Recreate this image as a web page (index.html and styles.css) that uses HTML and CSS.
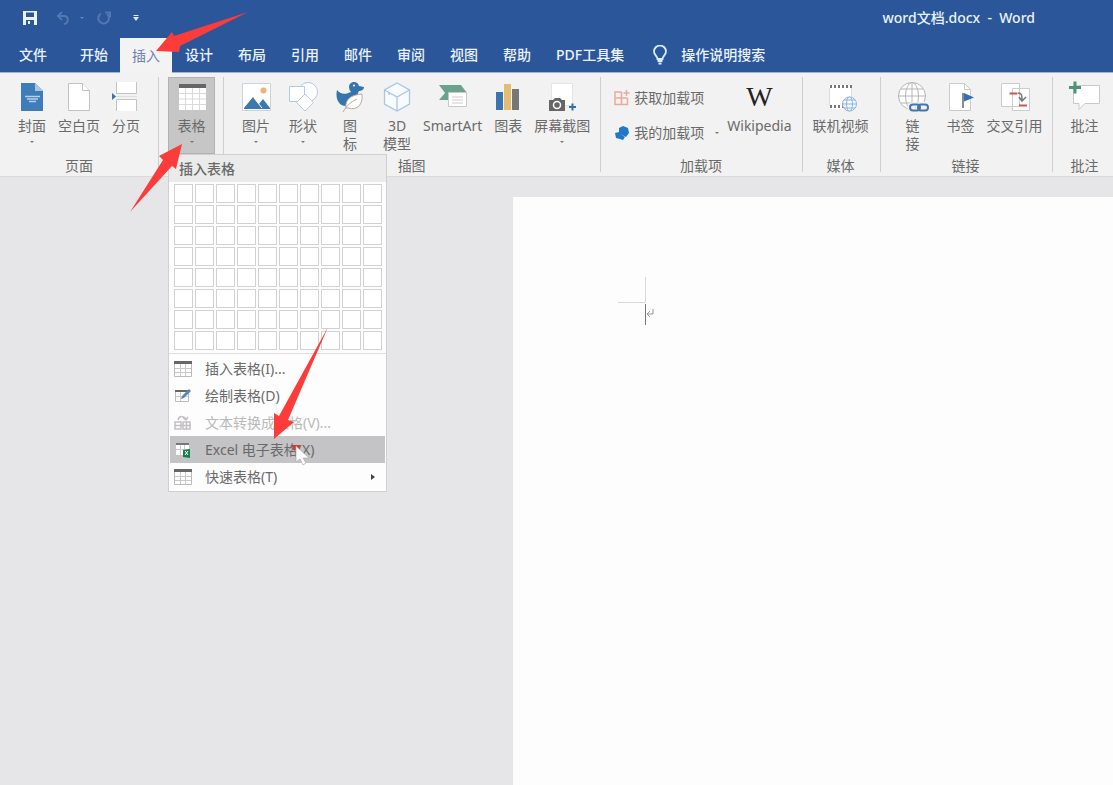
FILE: index.html
```html
<!DOCTYPE html>
<html lang="zh-CN">
<head>
<meta charset="utf-8">
<title>word文档.docx - Word</title>
<link rel="stylesheet" href="styles.css">
</head>
<body>
<header class="titlebar">
  <div class="quick">
    <button class="qbtn" aria-label="保存"><svg width="14" height="14" viewBox="0 0 14 14"><path d="M0 0h14v14H0z" fill="#eaf2fc"/><path d="M3 1.500h8v4.500H3zM3 9h8v5H3z" fill="#2b579a"/><path d="M5 10h2v3H5z" fill="#eaf2fc"/></svg></button>
    <button class="qbtn undo" aria-label="撤消"><svg width="28" height="14" viewBox="0 0 28 14" fill="none" stroke="#5277b2" stroke-width="2"><path d="M6 1L2 5l4 4M2 5h6c5 0 5 7 0 8"/><path d="M24 6h4l-2 2z" fill="#6286bd" stroke="none"/></svg></button>
    <button class="qbtn" aria-label="重复"><svg width="14" height="14" viewBox="0 0 14 14" fill="none" stroke="#5277b2" stroke-width="2"><path d="M4 2.500a5.300 5.300 0 1 0 6 .5M8 1.500h5v5"/></svg></button>
    <button class="qbtn more" aria-label="自定义快速访问工具栏"><svg width="8" height="8" viewBox="0 0 8 8" fill="#dce9f8"><path d="M1.500 1h5v1h-5zM1 3h6L4 7z"/></svg></button>
  </div>
  <h1 class="doc-title">word文档.docx&nbsp; -&nbsp; Word</h1>
</header>
<nav class="tabs">
  <button class="tab file">文件</button>
  <button class="tab">开始</button>
  <button class="tab active">插入</button>
  <button class="tab">设计</button>
  <button class="tab">布局</button>
  <button class="tab">引用</button>
  <button class="tab">邮件</button>
  <button class="tab">审阅</button>
  <button class="tab">视图</button>
  <button class="tab">帮助</button>
  <button class="tab">PDF工具集</button>
  <button class="tab tell"><svg width="14" height="20" viewBox="0 0 14 20" fill="none" stroke="#d9ecff" stroke-width="1.800"><path d="M4.500 14c0-3-3.500-4-3.500-7.500a6 6 0 0 1 12 0C13 10 9.500 11 9.500 14z"/><path d="M4.500 16h5M5.500 18.500h3"/></svg>操作说明搜索</button>
</nav>
<section class="ribbon">
  <div class="group">
    <div class="tools pages">
      <button class="tool"><svg width="32" height="32" viewBox="0 0 32 32"><path d="M5 2h14l8 8v20H5z" fill="#3f7cba"/><path d="M19 2l8 8h-8z" fill="#a9c6e4"/><path d="M9 15.500h15M11 18h11M13 20.500h7" stroke="#b5d0ea" stroke-width="1.500"/></svg><span>封面</span><i class="caret"></i></button>
      <button class="tool"><svg width="32" height="32" viewBox="0 0 32 32" fill="#fff" stroke="#c3c3c3"><path d="M5.500 2.500h14l7 7v20h-21z"/><path d="M19.500 2.500v7h7"/></svg><span>空白页</span></button>
      <button class="tool"><svg width="32" height="32" viewBox="0 0 32 32" fill="#fff" stroke="#c3c3c3"><path d="M6.500 1v11.500h20V1M6.500 30V18.500h20V30"/><path d="M7 1h19v11H7zM7 19h19v11H7z" stroke="none"/><path d="M5 15.500h22" stroke="#ddd"/><path d="M2 12l4 3.500L2 19z" fill="#41719c" stroke="none"/></svg><span>分页</span></button>
    </div>
    <div class="group-name">页面</div>
  </div>
  <div class="group">
    <div class="tools table-tools">
      <button class="tool pressed" aria-expanded="true"><svg width="32" height="32" viewBox="0 0 32 32"><path d="M3 3h27v26H3z" fill="#fff"/><path d="M3 3h27v4H3z" fill="#666"/><path d="M9.500 7v22M16.500 7v22M23.500 7v22M3 12.500h27M3 18h27M3 23.500h27" stroke="#dadada"/></svg><span>表格</span><i class="caret"></i></button>
    </div>
  </div>
  <div class="group">
    <div class="tools illus">
      <div class="wide">
        <button class="tool"><svg width="32" height="32" viewBox="0 0 32 32"><path d="M2.500 2.500h28v27h-28z" fill="#fff" stroke="#cbd3de"/><circle cx="23.500" cy="9.500" r="3" fill="#eeb27c"/><path d="M4 27l9-11 6 7 4-5 7 9v1H4z" fill="#3c78b0"/><path d="M14 17l8 10" stroke="#fff"/></svg><span>图片</span><i class="caret"></i></button>
        <button class="tool"><svg width="32" height="32" viewBox="0 0 32 32" fill="#fff" stroke="#b5c9e4"><circle cx="21" cy="11" r="9.500"/><path d="M2.500 5.500h15v15h-15z"/><path d="M18 13l8.500 8.500L18 30l-8.500-8.500z"/></svg><span>形状</span><i class="caret"></i></button>
        <button class="tool"><svg width="32" height="32" viewBox="0 0 32 32"><path d="M15 6c0-6 9-7 10-1l5 1c0 3-3 4-5 4-2 3-1 5 0 8 0 6-7 7-13 7C5 25 1 18 3 9c3 4 8 5 14 2-1-1-2-3-2-5z" fill="#3674ad"/><circle cx="20" cy="4.500" r="1" fill="#fff"/><path d="M12 27c-1-9 5-13 16-14 1 10-4 17-14 14z" fill="#fff" stroke="#bda69b"/><path d="M9 31c4-7 8-10 14-13" fill="none" stroke="#bda69b"/></svg><span class="narrow">图标</span></button>
        <button class="tool"><svg width="32" height="32" viewBox="0 0 32 32" fill="#f8fbff" stroke="#a9c6e5" stroke-width="1.300"><path d="M16 2l12.500 7v14L16 30 3.500 23V9z"/><path d="M3.500 9L16 16l12.500-7M16 16v14M8 11v3" fill="none"/></svg><span class="narrow model">3D<br>模型</span></button>
      </div>
      <div class="close">
        <button class="tool"><svg width="32" height="32" viewBox="0 0 32 32"><path d="M2 4h22l6 8-6 7H2l6-7z" fill="#6ba28e"/><path d="M11.500 11.500h18v14h-18z" fill="#fff" stroke="#c9c9c9"/><path d="M15 16h11M15 19h11M15 22h11" stroke="#ccc"/></svg><span>SmartArt</span></button>
        <button class="tool"><svg width="32" height="32" viewBox="0 0 32 32"><path d="M4 11h7v18H4z" fill="#3b75ad"/><path d="M12 3h7v26h-7z" fill="#e5bd72"/><path d="M20 8h7v21h-7z" fill="#777"/></svg><span>图表</span></button>
        <button class="tool"><svg width="32" height="32" viewBox="0 0 32 32"><path d="M5.500 2.500h21v22h-21z" fill="#fff" stroke="#e4e4e4"/><path d="M3 19h4l2-2h5l2 2h3v11H3z" fill="#666"/><circle cx="11" cy="24" r="3.500" fill="none" stroke="#fff" stroke-width="1.500"/><path d="M23 26h7M26.500 22.500v7" stroke="#356fa8" stroke-width="2"/></svg><span>屏幕截图</span><i class="caret"></i></button>
      </div>
    </div>
    <div class="group-name">插图</div>
  </div>
  <div class="group">
    <div class="tools addins">
      <div class="stack">
        <button class="row-tool"><svg width="16" height="16" viewBox="0 0 16 16" fill="none" stroke="#ecaa9a" stroke-width="1.500"><path d="M7.500 2H1v12.500h12.500V8M1 8h12.500M7.500 2v12.500M12.500 0v6M9.500 3h6"/></svg>获取加载项</button>
        <button class="row-tool"><svg width="16" height="16" viewBox="0 0 16 16" fill="#2277c6"><path d="M5 3l4-2 5 2 1 5-3 4-4-2-3-2z"/><path d="M1 8l4-1 3 3 3 2-2 3-3-1-4-1z"/></svg>我的加载项<i class="caret side"></i></button>
      </div>
      <button class="tool"><span class="wiki" aria-hidden="true">W</span><span>Wikipedia</span></button>
    </div>
    <div class="group-name">加载项</div>
  </div>
  <div class="group">
    <div class="tools media">
      <button class="tool"><svg width="32" height="32" viewBox="0 0 32 32"><path d="M4 4h23v24H4z" fill="#fff"/><path d="M5 5.500h23M5 25.500h14" stroke="#777" stroke-width="3" stroke-dasharray="2 2"/><path d="M4.500 7v18M26.500 7v9" stroke="#ddd"/><g fill="#f4f9ff" stroke="#8fb4da"><circle cx="24.500" cy="23" r="7"/><ellipse cx="24.500" cy="23" rx="3" ry="7"/><path d="M17.500 23h14M19 19h11M19 27h11"/></g></svg><span>联机视频</span></button>
    </div>
    <div class="group-name">媒体</div>
  </div>
  <div class="group">
    <div class="tools links">
      <button class="tool"><svg width="34" height="32" viewBox="0 0 34 32"><g fill="#fff" stroke="#b5b5b5"><circle cx="16" cy="15" r="13.500"/><ellipse cx="16" cy="15" rx="6.500" ry="13.500"/><path d="M16 1.500v27M2.500 15h27M5 8h22M5 22h22"/></g><g fill="none" stroke="#f1f1f1" stroke-width="5"><rect x="14" y="23.500" width="10" height="6" rx="3"/><rect x="22" y="23.500" width="10" height="6" rx="3"/></g><g fill="none" stroke="#4378ae" stroke-width="2"><rect x="14" y="23.500" width="10" height="6" rx="3"/><rect x="22" y="23.500" width="10" height="6" rx="3"/></g></svg><span class="narrow">链接</span></button>
      <div class="close">
        <button class="tool"><svg width="32" height="32" viewBox="0 0 32 32"><path d="M4.500 2.500h15l6 6v21h-21z" fill="#fff" stroke="#ccc"/><path d="M19.500 2.500v6h6" fill="none" stroke="#ccc"/><path d="M18 12v15" stroke="#667" stroke-width="1.500"/><path d="M19 12l10 4.500-10 4z" fill="#356fae"/></svg><span>书签</span></button>
        <button class="tool"><svg width="32" height="32" viewBox="0 0 32 32"><path d="M2.500 2.500h18v23h-18zM13.500 7.500h17v22h-17z" fill="#fff" stroke="#ccc"/><path d="M14 8h6v17h-6z" fill="#fff"/><path d="M10.500 12.500h8M20 24.500h8" stroke="#c65b48" stroke-width="2"/><path d="M19 12c4 0 4 3 4 7M20 16l3 4 4-4" fill="none" stroke="#777" stroke-width="1.500"/></svg><span>交叉引用</span></button>
      </div>
    </div>
    <div class="group-name">链接</div>
  </div>
  <div class="group">
    <div class="tools comments">
      <button class="tool"><svg width="32" height="32" viewBox="0 0 32 32"><path d="M4.500 4.500h26v18H16l-6 6v-6H4.500z" fill="#fff" stroke="#c9c9c9"/><path d="M0 6.500h12M6 .5v12" stroke="#4e9277" stroke-width="3"/></svg><span>批注</span></button>
    </div>
    <div class="group-name">批注</div>
  </div>
</section>
<main class="workspace">
  <article class="page">
    <svg class="caret-mark" width="40" height="50" viewBox="0 0 40 50" fill="none"><path d="M27.500 0v25M0 25.500h27" stroke="#d8d8d8"/><path d="M27.500 27v21" stroke="#777"/><path d="M35 32v5h-6M32 34l-3 3 3 3" stroke="#999"/></svg>
  </article>
</main>
<div class="dropdown">
  <h2 class="drop-title">插入表格</h2>
  <div class="cells" id="cells"></div>
  <div class="menu">
    <button class="item"><svg width="18" height="16" viewBox="0 0 18 16"><path d="M.5.500h17v15H.5z" fill="#fff" stroke="#bbb"/><path d="M0 0h18v3H0z" fill="#666"/><path d="M6.500 3v12M11.500 3v12M1 7.500h16M1 11.500h16" stroke="#c8c8c8"/></svg><span>插入表格(I)...</span></button>
    <button class="item"><svg width="18" height="16" viewBox="0 0 18 16"><path d="M1.500 2.500h13v11h-13z" fill="#fff" stroke="#bbb"/><path d="M1 2h13v2H1z" fill="#666"/><path d="M2 8.500h12M6.500 4v9" stroke="#ccc"/><path d="M7 11l1-3 7-7 2 2-7 7z" fill="#5688b8"/></svg><span>绘制表格(D)</span></button>
    <button class="item" disabled><svg width="18" height="16" viewBox="0 0 18 16" fill="none" stroke="#c4bfc4" stroke-width="1.500"><path d="M1 7h6v7H1zM1 10.500h16M9 7h7v7H9zM12.500 7v7M4 5c1-5 7-4 8 0M9 3l3 2 2-3"/></svg><span>文本转换成表格(V)...</span></button>
    <button class="item hot"><svg width="18" height="16" viewBox="0 0 18 16"><path d="M2 1h13v12H2z" fill="#fff"/><path d="M2 1h13v2H2z" fill="#777"/><path d="M6.500 3v10M10.500 3v10M2 7.500h13" stroke="#ccc"/><path d="M9 8l7-1v9l-7-1z" fill="#16804d"/><path d="M11 9l3 4M14 9l-3 4" stroke="#fff"/></svg><span>Excel 电子表格(X)</span></button>
    <button class="item"><svg width="18" height="16" viewBox="0 0 18 16"><path d="M.5.500h17v15H.5z" fill="#fff" stroke="#bbb"/><path d="M0 0h18v3H0z" fill="#666"/><path d="M6.500 3v12M11.500 3v12M1 7.500h16M1 11.500h16" stroke="#c8c8c8"/></svg><span>快速表格(T)</span><svg class="sub" width="4" height="6" viewBox="0 0 4 6"><path d="M0 0l4 3-4 3z" fill="#444"/></svg></button>
  </div>
</div>
<svg class="arrows" width="400" height="500" viewBox="0 0 400 500" aria-hidden="true">
  <path d="M291 445h9v5h-6z" fill="#d03a35"/>
  <path d="M296 446v16l4-3 3 6 3-2-3-5h6z" fill="#fff" stroke="#aaa" stroke-width=".7"/>
  <g fill="#fb3c3a"><path d="M248 12L174 36l-2-4-16 19 23 1 1-6z"/><path d="M130 212l33-52-4-4 23-12-6 25-4-3z"/><path d="M328 327l-49 89-5-3v26l20-17-6-2z"/></g>
</svg>
<script src="grid.js"></script>
</body>
</html>
```
FILE: grid.js
```js
const cells = document.getElementById("cells");
for (let row = 1; row <= 8; row++) {
  for (let col = 1; col <= 10; col++) {
    const cell = document.createElement("button");
    cell.className = "cell";
    cell.setAttribute("aria-label", col + "x" + row);
    cells.append(cell);
  }
}
```
FILE: styles.css
```css
* { box-sizing: border-box; }
body {
  margin: 0;
  min-height: 100vh;
  display: flex;
  flex-direction: column;
  position: relative;
  overflow-x: hidden;
  background: #e6e6e8;
  color: #6a6a6a;
  font: 14px/18px "Noto Sans", "Noto Sans CJK SC", sans-serif;
}
button {
  margin: 0;
  padding: 0;
  border: 0;
  background: none;
  color: inherit;
  font: inherit;
  white-space: nowrap;
}
svg { display: block; flex: none; }

.titlebar {
  height: 38px;
  padding: 0 78px 2px 23px;
  display: flex;
  align-items: center;
  justify-content: space-between;
  background: #2b579a;
}
.quick { display: flex; align-items: center; gap: 13px; }
.undo { margin-left: 6px; }
.more { margin-left: 8px; }
.doc-title {
  margin: 0;
  color: #e9f2fc;
  font-size: 14px;
  font-weight: 500;
  line-height: 18px;
}

.tabs {
  height: 35px;
  display: flex;
  background: #2b579a;
  border-bottom: 1px solid #9db4d9;
  color: #e9f2fc;
  font-weight: 500;
}
.tab { padding: 0 12px 0 13px; }
.tab.file { padding: 0 20px 0 19px; }
.tab.active { height: 35px; padding: 0 12px; background: #f3f3f3; color: #6d83ab; font-weight: 400; }
.tell { display: flex; align-items: center; gap: 14px; padding-left: 17px; }

.ribbon {
  flex: none;
  display: flex;
  background: #f2f2f2;
  border-bottom: 1px solid #d9d9db;
}
.group {
  padding: 4px 0 1px;
  display: flex;
  flex-direction: column;
  justify-content: space-between;
  gap: 3px;
  position: relative;
}
.group + .group::before {
  content: "";
  position: absolute;
  left: 0;
  top: 4px;
  bottom: 4px;
  width: 1px;
  background: #cfcfcf;
}
.group-name { text-align: center; }
.tools, .wide, .close { display: flex; align-items: flex-start; }
.pages { gap: 12px; padding: 0 18px; }
.table-tools { padding: 0 8px 0 10px; }
.illus { padding: 0 10px 0 19px; gap: 12px; }
.wide { gap: 19px; }
.close { gap: 12px; }
.addins { padding: 0 10px 0 14px; gap: 8px; }
.media { padding: 0 11px; }
.links { padding: 0 9px 0 18px; gap: 19px; }
.comments { padding: 0 19px; }
.tool {
  height: 77px;
  padding-top: 4px;
  display: flex;
  flex-direction: column;
  align-items: center;
}
.tool > svg { margin: 0 -2px 4px; }
.narrow { width: 28px; padding: 0 7px; white-space: normal; }
.narrow.model { padding: 0; }
.pressed { width: 47px; background: #c6c6c6; border: 1px solid #b2b2b2; padding-top: 3px; }
.caret {
  margin-top: 6px;
  border: 2px solid transparent;
  border-top-color: #777;
}
.caret.side { margin: 2px 0 0 7px; }
.stack { display: flex; flex-direction: column; gap: 17px; padding-top: 12px; }
.row-tool { display: flex; align-items: center; gap: 4px; }
.wiki {
  height: 32px;
  margin-bottom: 4px;
  color: #222;
  font: 28px/32px "Liberation Serif", serif;
}

.workspace { flex: 1; display: flex; padding-top: 20px; }
.page {
  flex: 1;
  margin-left: 46.1%;
  padding: 80px 105px;
  background: #fdfdfd;
}

.dropdown {
  position: absolute;
  left: 168px;
  top: 154px;
  width: 219px;
  background: #fdfdfd;
  border: 1px solid #d0d0d0;
}
.drop-title {
  margin: 0;
  padding: 5px 10px 4px;
  background: #ebebeb;
  font-size: 14px;
  font-weight: 500;
  line-height: 18px;
}
.cells {
  display: grid;
  grid-template-columns: repeat(10, 19px);
  gap: 2px;
  padding: 2px 5px 3px;
  border-bottom: 1px solid #dedede;
}
.cell { height: 19px; border: 1px solid #d2d2d2; background: #fff; }
.menu { padding: 1px; }
.item {
  width: 100%;
  height: 27px;
  padding: 0 10px 0 4px;
  display: flex;
  align-items: center;
  gap: 13px;
}
.item:disabled { color: #b9b9b9; }
.hot { background: #c4c3c5; }
.sub { margin-left: auto; }

.arrows { position: absolute; left: 0; top: 0; pointer-events: none; }
```
